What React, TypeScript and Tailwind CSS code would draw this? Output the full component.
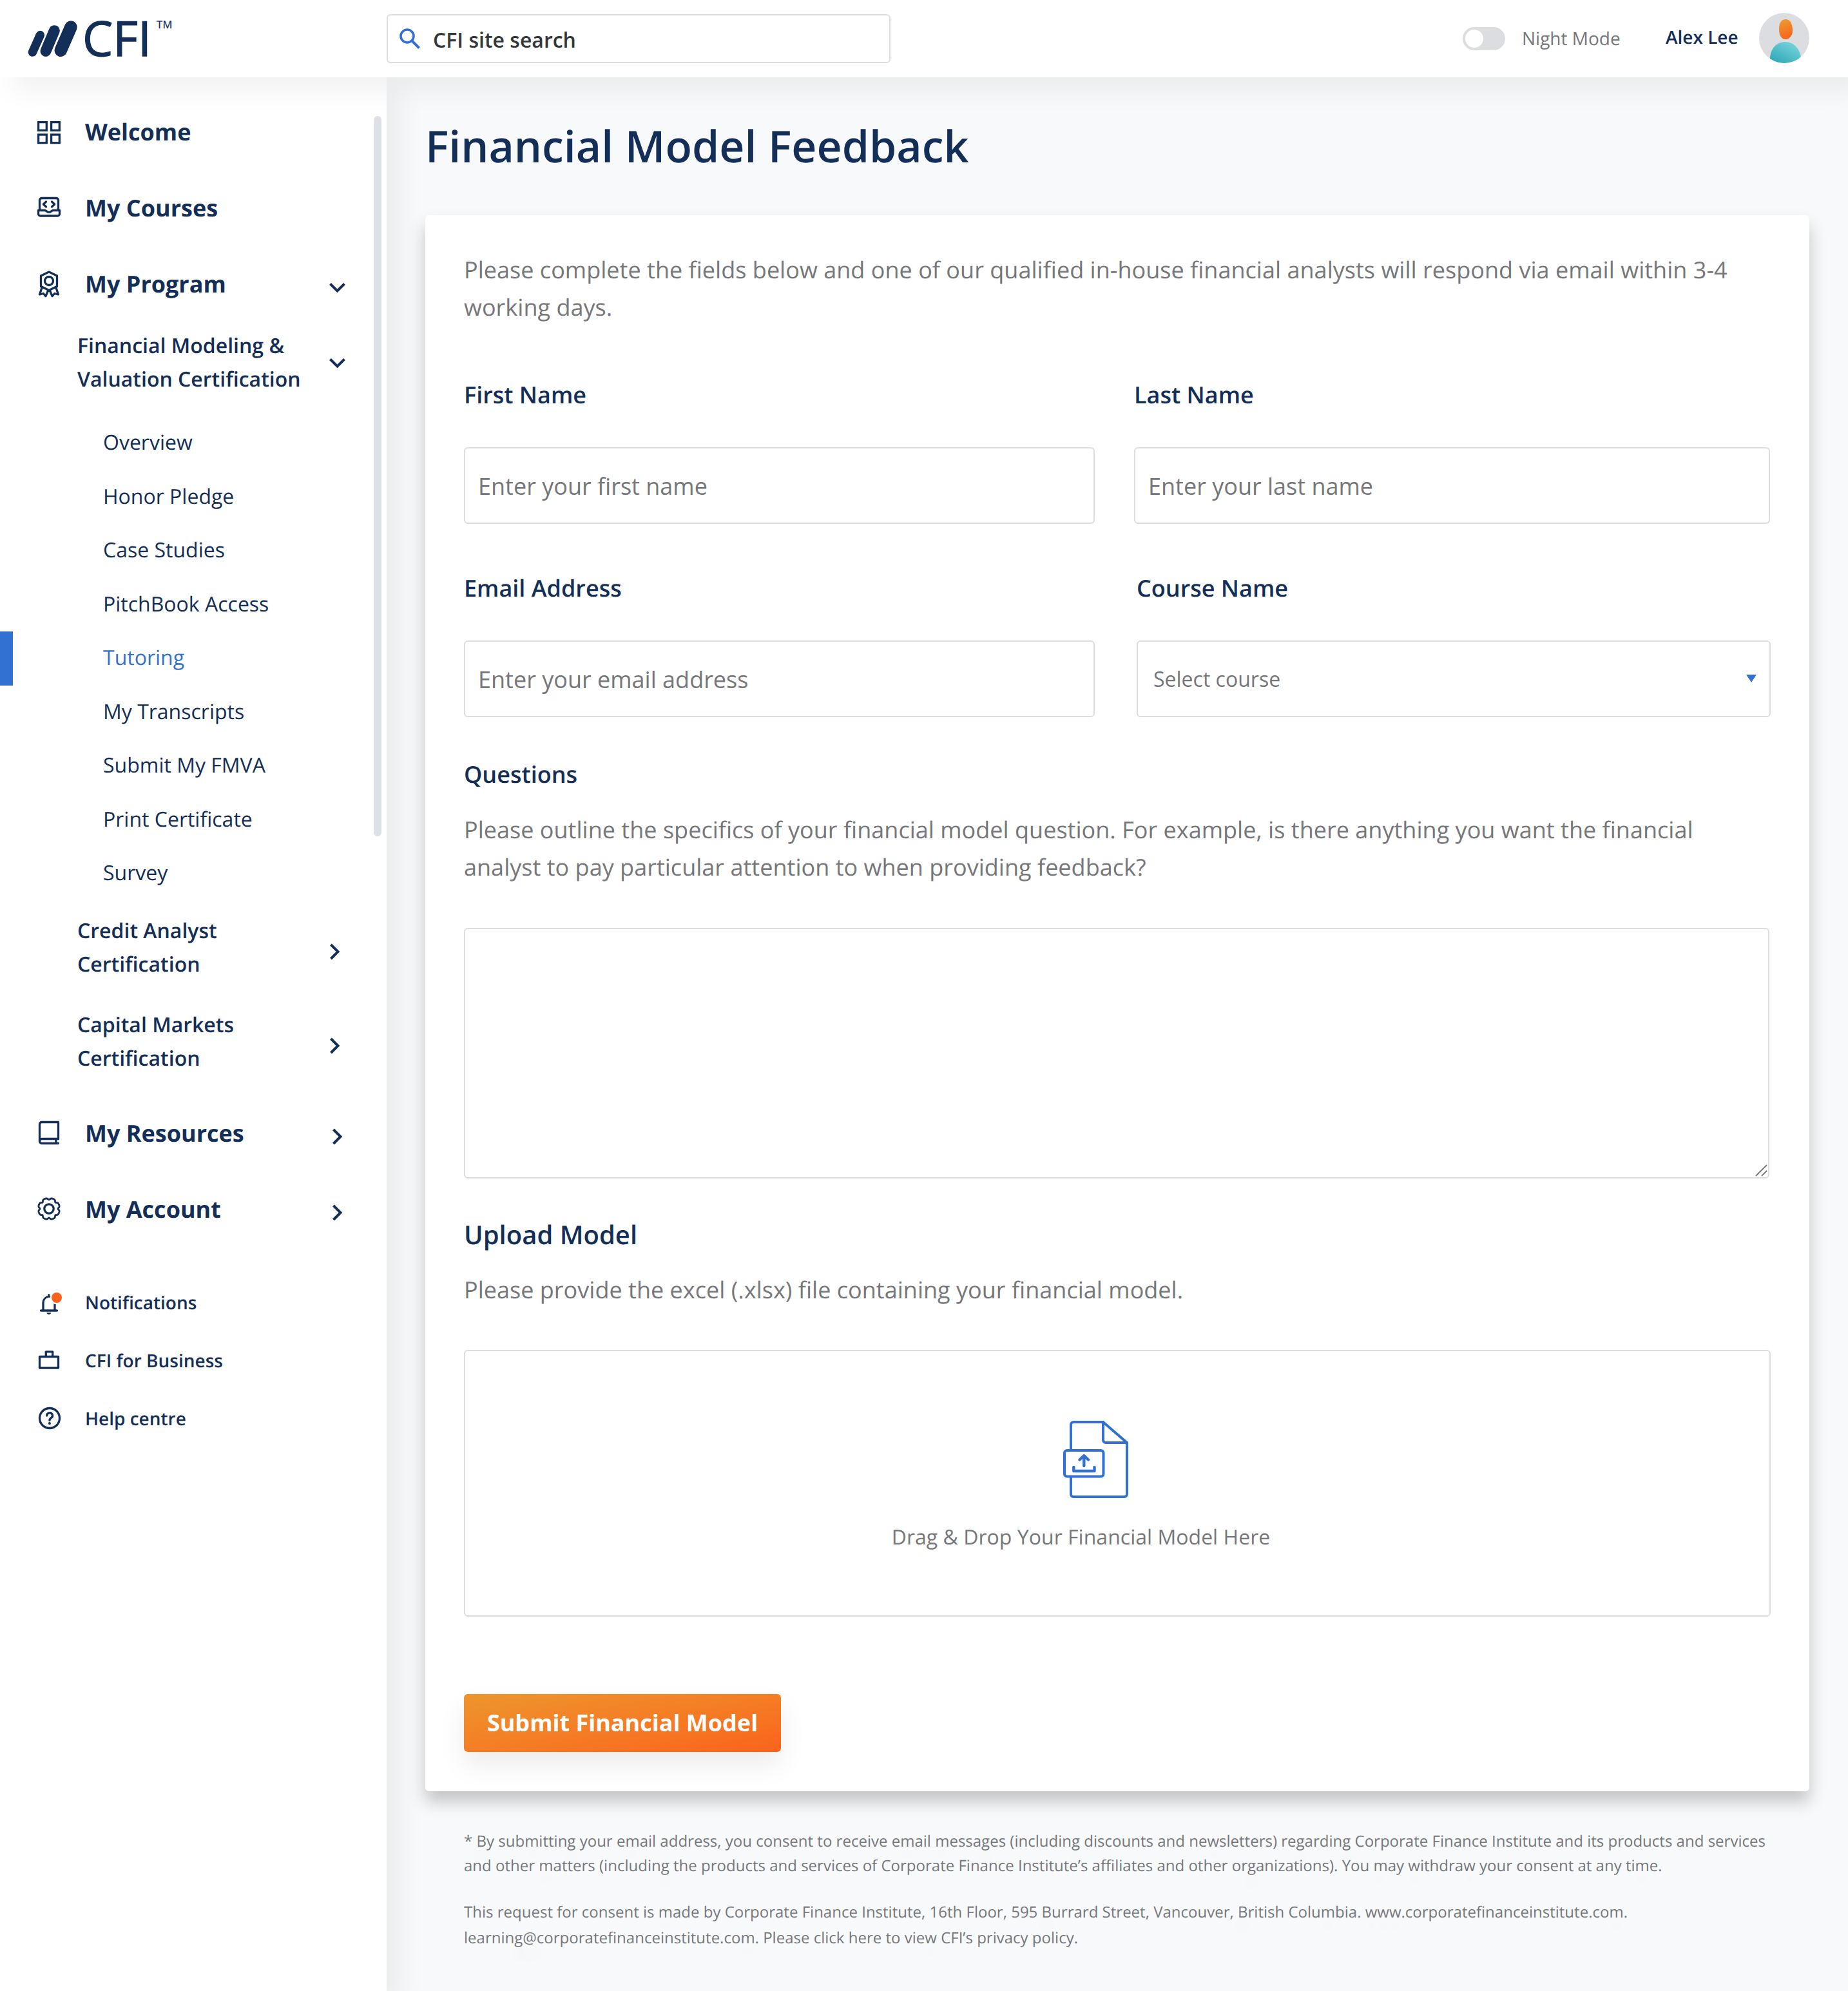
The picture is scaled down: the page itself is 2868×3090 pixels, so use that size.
import React from "react";

const NAVY = "#132e57";
const BLUE = "#3271d2";

function IconBox({ children }: { children: React.ReactNode }) {
  return (
    <svg
      viewBox="0 0 48 48"
      className="h-12 w-12 shrink-0"
      fill="none"
      stroke={NAVY}
      strokeWidth={3.3}
      strokeLinejoin="round"
      strokeLinecap="round"
    >
      {children}
    </svg>
  );
}

const GridIcon = () => (
  <IconBox>
    <g strokeLinejoin="miter">
      <rect x="7.6" y="9.6" width="12.7" height="12.7" />
      <rect x="27.6" y="9.6" width="12.7" height="12.7" />
      <rect x="7.6" y="29" width="12.7" height="12.7" />
      <rect x="27.6" y="29" width="12.7" height="12.7" />
    </g>
  </IconBox>
);

const LaptopIcon = () => (
  <IconBox>
    <path d="M9.5 28V12.8a3.3 3.3 0 0 1 3.3-3.3h22.4a3.3 3.3 0 0 1 3.3 3.3V28" />
    <path d="M7.5 28.5H17.5c2.5 0 3 3 6.5 3s4-3 6.5-3H40.5V34a3 3 0 0 1-3 3H10.5a3 3 0 0 1-3-3Z" />
    <path d="M19.6 15l-4.3 4 4.3 4M28.4 15l4.3 4-4.3 4" />
  </IconBox>
);

const AwardIcon = () => (
  <IconBox>
    <path d="M24 6L36.5 12V28.6L24 34.6L11.5 28.6V12Z" />
    <circle cx="24" cy="20" r="6.5" />
    <path d="M13 30.5L9.5 41L15.3 39.5L19 43.6L22.6 35M35 30.5L38.5 41L32.7 39.5L29 43.6L25.4 35" />
  </IconBox>
);

const BookIcon = () => (
  <IconBox>
    <path d="M38.5 33.5V7.5H12.8a3.3 3.3 0 0 0-3.3 3.3V37" />
    <path d="M38.5 33.5H13a3.5 3.5 0 0 0 0 7H38.5M34.8 33.5v7" />
  </IconBox>
);

/* Eight rounded lobes separated by narrow notches. */
const gearOutline =
  Array.from({ length: 128 }, (_, i) => {
    const a = (i / 128) * Math.PI * 2;
    const r = 16.7 - 2.7 * Math.pow(Math.cos(4 * a), 6);
    return `${i ? "L" : "M"}${(24 + r * Math.cos(a)).toFixed(2)} ${(24 + r * Math.sin(a)).toFixed(2)}`;
  }).join("") + "Z";

const GearIcon = () => (
  <IconBox>
    <path d={gearOutline} strokeWidth={2.8} />
    <circle cx="24" cy="24" r="7.2" />
  </IconBox>
);

const BellIcon = () => (
  <IconBox>
    <path d="M11.5 37H36.5" />
    <path d="M15 36.5V25c0-5 3.5-9 8.6-10M23.8 12.7V15M33 36.5V25c0-5-3.5-9-8.6-10" />
    <path d="M20.3 40.2h7c-.4 1.8-1.800 2.900-3.500 2.900s-3.100-1.100-3.500-2.900z" fill={NAVY} stroke="none" />
    <circle cx="36" cy="17" r="10.3" fill="#fff" stroke="none" />
    <circle cx="36" cy="17" r="8" fill="#fa621c" stroke="none" />
  </IconBox>
);

const BriefcaseIcon = () => (
  <IconBox>
    <rect x="9.5" y="18.5" width="29" height="17.5" />
    <path d="M19.3 18V10.8H29.7V18" />
  </IconBox>
);

const HelpIcon = () => (
  <IconBox>
    <circle cx="25" cy="24" r="15.5" />
    <path d="M20.7 20a4.4 4.2 0 1 1 6.6 3.6c-1.600 1-2.400 1.700-2.400 4" />
    <circle cx="24.9" cy="32" r="2.1" fill={NAVY} stroke="none" />
  </IconBox>
);

function Chevron({ open, className }: { open?: boolean; className: string }) {
  return (
    <svg viewBox="0 0 32 32" className={`h-8 w-8 shrink-0 ${className}`} fill="none" stroke={NAVY} strokeWidth={4}>
      <path d={open ? "M4.5 9.5L15.5 20.5L26.5 9.5" : "M9.5 5L20.5 16L9.5 27"} />
    </svg>
  );
}

function NavRow({ icon, label, chevron }: { icon: React.ReactNode; label: string; chevron?: "open" | "closed" }) {
  return (
    <a className="flex h-[118px] items-center pr-[60px] pl-[52px]">
      {icon}
      <span className="mt-[2px] ml-8 text-[36px] font-bold">{label}</span>
      {chevron && <Chevron open={chevron === "open"} className="mt-[13px] ml-auto" />}
    </a>
  );
}

function SubHead({ lines, open }: { lines: [string, string]; open?: boolean }) {
  return (
    <a className="flex items-center pl-[120px] text-[32px] leading-[52px] font-semibold">
      <span>
        {lines[0]}
        <br />
        {lines[1]}
      </span>
      {open ? <Chevron open className="mt-[2px] mr-[60px] ml-auto" /> : <Chevron className="mt-3 mr-[64px] ml-auto" />}
    </a>
  );
}

const programLinks = [
  "Overview",
  "Honor Pledge",
  "Case Studies",
  "PitchBook Access",
  "Tutoring",
  "My Transcripts",
  "Submit My FMVA",
  "Print Certificate",
  "Survey",
];

function Sidebar() {
  return (
    <aside className="relative z-10 flex w-[600px] shrink-0 flex-col bg-white pt-[25px] text-[#132e57] shadow-[20px_20px_40px_rgba(0,0,0,0.06)]">
      <NavRow icon={<GridIcon />} label="Welcome" />
      <NavRow icon={<LaptopIcon />} label="My Courses" />
      <NavRow icon={<AwardIcon />} label="My Program" chevron="open" />
      <div className="mt-[12px]">
        <SubHead lines={["Financial Modeling &", "Valuation Certification"]} open />
      </div>
      <nav className="mt-[30.5px] flex flex-col text-[32px]">
        {programLinks.map((l) => (
          <a
            key={l}
            className={
              l === "Tutoring"
                ? "relative flex h-[83.5px] items-center pl-[160px] text-[#3271d2]"
                : "flex h-[83.5px] items-center pl-[160px]"
            }
          >
            {l === "Tutoring" && <i className="absolute top-[0.5px] left-0 h-[84px] w-5 bg-[#3271d2]" />}
            {l}
          </a>
        ))}
      </nav>
      <div className="mt-[21.5px] flex flex-col gap-[42px]">
        <SubHead lines={["Credit Analyst", "Certification"]} />
        <SubHead lines={["Capital Markets", "Certification"]} />
      </div>
      <div className="mt-[30px]">
        <NavRow icon={<BookIcon />} label="My Resources" chevron="closed" />
        <NavRow icon={<GearIcon />} label="My Account" chevron="closed" />
      </div>
      <div className="mt-[41px] flex flex-col text-[28px] font-semibold">
        <a className="flex h-[90px] items-center gap-8 pl-[52px]">
          <BellIcon />
          <span className="mt-[2px]">Notifications</span>
        </a>
        <a className="flex h-[90px] items-center gap-8 pl-[52px]">
          <BriefcaseIcon />
          <span className="mt-[2px]">CFI for Business</span>
        </a>
        <a className="flex h-[90px] items-center gap-8 pl-[52px]">
          <HelpIcon />
          <span className="mt-[2px]">Help centre</span>
        </a>
      </div>
      <div className="absolute top-[60px] right-2 h-[1118px] w-3 rounded-full bg-[#dde1e6]" />
    </aside>
  );
}

function Header() {
  return (
    <header className="relative z-20 flex h-[120px] items-start bg-white shadow-[20px_20px_40px_rgba(0,0,0,0.06)]">
      <div className="flex w-[600px] shrink-0 items-start text-[#132e57]">
        <svg viewBox="40 28 84 64" className="mt-7 ml-10 h-16 w-[84px]" stroke={NAVY} strokeLinecap="round">
          <path d="M62.3 54.5L50.5 81" strokeWidth="13.5" />
          <path d="M84.3 47.7L71 79.3" strokeWidth="17" />
          <path d="M110 42L94.2 78.3" strokeWidth="19.5" />
        </svg>
        <span className="mt-[21px] ml-1 text-[75px] leading-[75px] [-webkit-text-stroke:1.3px_#132e57]">CFI</span>
        <span className="mt-[30px] ml-2 text-[16.5px] leading-4 tracking-[0.5px] [-webkit-text-stroke:0.3px_#132e57]">TM</span>
      </div>
      <label className="mt-[22px] flex h-[76px] w-[782px] items-center rounded-md border-2 border-[#dcdde0] pl-[18px]">
        <svg viewBox="0 0 32 32" className="h-8 w-8" fill="none" stroke={BLUE} strokeWidth={3.6}>
          <circle cx="12" cy="12" r="10" />
          <path d="M19.5 19.5L30.5 30.5" strokeWidth={4} />
        </svg>
        <input
          className="mt-[3px] ml-5 flex-1 text-[32px] font-semibold text-[#333739] outline-none placeholder:text-[#333739] placeholder:opacity-100"
          placeholder="CFI site search"
        />
      </label>
      <div className="mr-[60px] ml-auto flex h-[118px] items-center">
        <span className="mt-[2px] flex h-9 w-[66px] items-center rounded-full bg-[#dcdde0] pl-1">
          <span className="h-7 w-7 rounded-full bg-white" />
        </span>
        <span className="mt-px ml-[26px] w-[223px] text-[28px] text-[#75777b]">Night Mode</span>
        <span className="mb-[3px] w-[145px] text-[28px] font-semibold whitespace-nowrap text-[#132e57]">Alex Lee</span>
        <svg viewBox="0 0 78 78" className="h-[78px] w-[78px]">
          <defs>
            <linearGradient id="head" x1="0.3" y1="0" x2="0.6" y2="1">
              <stop offset="0.1" stopColor="#ed952d" />
              <stop offset="1" stopColor="#fa621c" />
            </linearGradient>
            <linearGradient id="body" x1="0.8" y1="0" x2="0.1" y2="1">
              <stop offset="0" stopColor="#7ad6df" />
              <stop offset="1" stopColor="#2ba6b4" />
            </linearGradient>
            <clipPath id="disc">
              <circle cx="39" cy="39" r="39" />
            </clipPath>
          </defs>
          <circle cx="39" cy="39" r="39" fill="#dcdde0" />
          <path d="M41 10c8 0 11 8 11 18c0 8-6 13-11 13s-10-4-10-16c0-10 4-15 10-15z" fill="url(#head)" />
          <path d="M17 78V70C18 55 27 45 41 45c13 0 24 12 24 27v6z" fill="url(#body)" clipPath="url(#disc)" />
        </svg>
      </div>
    </header>
  );
}

function Field({ label, placeholder }: { label: string; placeholder: string }) {
  return (
    <label className="flex flex-col">
      <span className="text-[36px] leading-[50px] font-semibold text-[#132e57]">{label}</span>
      <input
        className="mt-[56px] h-[119px] rounded-md border-2 border-[#dcdde0] pt-[2px] pl-5 text-[36px] outline-none placeholder:text-[#75777b] placeholder:opacity-100"
        placeholder={placeholder}
      />
    </label>
  );
}

function UploadIcon() {
  return (
    <svg viewBox="0 0 102 120" className="h-[120px] w-[102px]" fill="none" stroke={BLUE} strokeWidth={4} strokeLinejoin="round" strokeLinecap="round">
      <path d="M12 45V6a4 4 0 0 1 4-4H62L99 34V114a4 4 0 0 1-4 4H16a4 4 0 0 1-4-4V88" strokeLinecap="butt" />
      <path d="M62 2V30a4 4 0 0 0 4 4H99" />
      <rect x="2" y="46" width="60.5" height="40.5" rx="4" />
      <path d="M32.3 70V55M25.5 60.5L32.3 54L39 60.5M16.3 72V78H48.5V72" strokeWidth={4.4} />
    </svg>
  );
}

function FormCard() {
  return (
    <form className="mt-[68px] flex flex-col rounded-md bg-white px-[60px] pt-[56px] pb-[61px] text-[36px] leading-[58px] text-[#75777b] shadow-[0_16px_26px_rgba(0,0,0,0.22)]">
      <p className="tracking-[0.025px]">
        Please complete the fields below and one of our qualified in-house financial analysts will respond via email within 3-4
        <br />
        working days.
      </p>
      <div className="mt-[82px] grid grid-cols-[979px_987px] gap-x-[61px]">
        <Field label="First Name" placeholder="Enter your first name" />
        <Field label="Last Name" placeholder="Enter your last name" />
      </div>
      <div className="mt-[75px] grid grid-cols-[979px_984px] gap-x-[65px]">
        <Field label="Email Address" placeholder="Enter your email address" />
        <div className="flex flex-col">
          <span className="text-[36px] leading-[50px] font-semibold text-[#132e57]">Course Name</span>
          <button
            type="button"
            className="mt-[56px] flex h-[119px] items-center justify-between rounded-md border-2 border-[#dcdde0] pr-[20px] pl-[24px] text-[32px]"
          >
            Select course
            <svg viewBox="0 0 16 12" className="mb-[2px] h-3 w-4" fill={BLUE}>
              <path d="M0 0H16L8 12Z" />
            </svg>
          </button>
        </div>
      </div>
      <h2 className="mt-[64px] leading-[50px] font-semibold text-[#132e57]">Questions</h2>
      <p className="mt-8 tracking-[0.02px]">
        Please outline the specifics of your financial model question. For example, is there anything you want the financial
        <br />
        analyst to pay particular attention to when providing feedback?
      </p>
      <div className="mt-[65px] flex h-[389px] w-[2026px] items-end justify-end rounded-md border-2 border-[#dcdde0]">
        <svg viewBox="0 0 20 20" className="h-5 w-5" stroke="#75777b" strokeWidth={1.8}>
          <path d="M1 18L18 1M10 18L18 10" />
        </svg>
      </div>
      <h2 className="mt-[57px] text-[40px] leading-[60px] font-semibold text-[#132e57]">Upload Model</h2>
      <p className="mt-[27px] tracking-[0.02px]">Please provide the excel (.xlsx) file containing your financial model.</p>
      <div className="mt-16 flex h-[414px] flex-col items-center rounded-md border-2 border-[#dcdde0] pt-[108px] pr-[113px]">
        <div className="ml-[46px]">
          <UploadIcon />
        </div>
        <span className="mt-[35px] text-[32px] leading-[52px] tracking-[0.02px]">Drag &amp; Drop Your Financial Model Here</span>
      </div>
      <button
        type="button"
        className="mt-[120px] flex h-[90px] w-[492px] items-center justify-center rounded-md bg-linear-to-br from-[#ed952d] to-[#fa621c] font-bold text-white shadow-[0_20px_40px_rgba(0,0,0,0.08)]"
      >
        Submit Financial Model
      </button>
    </form>
  );
}

export default function App() {
  return (
    <div className="flex h-[3090px] w-[2868px] flex-col overflow-hidden bg-[#f8f9fb] font-['Open_Sans',sans-serif] [text-rendering:geometricPrecision]">
      <Header />
      <div className="flex flex-1">
        <Sidebar />
        <main className="relative z-10 flex-1 px-[60px] pt-[66px]">
          <h1 className="text-[68px] leading-[80px] font-semibold text-[#132e57]">Financial Model Feedback</h1>
          <FormCard />
          <footer className="mt-[59px] pl-[60px] text-[24px] leading-[38px] tracking-[0.01px] whitespace-nowrap text-[#75777b] [text-shadow:0_20px_40px_rgba(0,0,0,0.1)]">
            <p>
              * By submitting your email address, you consent to receive email messages (including discounts and newsletters) regarding Corporate Finance Institute and its products and services
              <br />
              and other matters (including the products and services of Corporate Finance Institute’s affiliates and other organizations). You may withdraw your consent at any time.
            </p>
            <p className="mt-[33px] leading-10">
              This request for consent is made by Corporate Finance Institute, 16th Floor, 595 Burrard Street, Vancouver, British Columbia. www.corporatefinanceinstitute.com.
              <br />
              learning@corporatefinanceinstitute.com. Please click here to view CFI’s privacy policy.
            </p>
          </footer>
        </main>
      </div>
    </div>
  );
}
